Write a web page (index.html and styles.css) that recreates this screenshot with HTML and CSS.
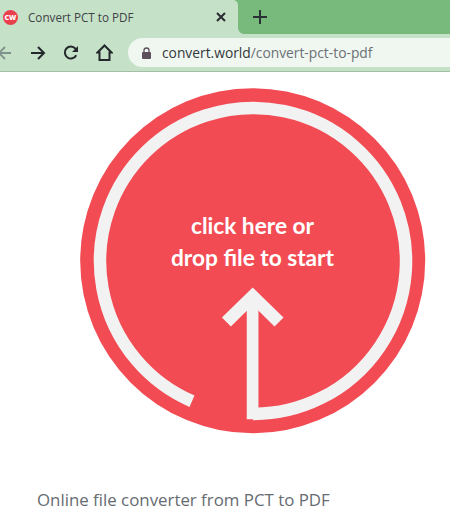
FILE: index.html
```html
<!DOCTYPE html>
<html lang="en">
<head>
<meta charset="utf-8">
<title>Convert PCT to PDF</title>
<link rel="stylesheet" href="styles.css">
</head>
<body>
<header class="chrome">
  <div class="tabstrip">
    <div class="tab">
      <span class="favicon">CW</span>
      <span class="tab-title">Convert PCT to PDF</span>
      <svg class="tab-close" width="10" height="10" viewBox="0 0 10 10"><path d="M1 1l8 8M9 1l-8 8" stroke="#2b2b33" stroke-width="2" fill="none"/></svg>
    </div>
    <svg class="new-tab" width="14" height="14" viewBox="0 0 14 14"><path d="M7 0v14M0 7h14" stroke="#2b3034" stroke-width="2" fill="none"/></svg>
  </div>
  <div class="toolbar">
    <svg class="nav nav-back" width="14" height="14" viewBox="0 0 14 14"><path d="M13 7H1M7 1L1 7l6 6" stroke="#80908a" stroke-width="1.8" fill="none"/></svg>
    <svg class="nav nav-forward" width="16" height="14" viewBox="0 0 16 14"><path d="M1 7h13M8 1l6 6-6 6" stroke="#24282c" stroke-width="2" fill="none"/></svg>
    <svg class="nav nav-reload" width="16" height="16" viewBox="0 0 16 16"><path d="M13.2 10.2A6 6 0 1 1 12.4 3.6L14 5.2" stroke="#24282c" stroke-width="2" fill="none"/><path d="M15 1v6H9z" fill="#24282c"/></svg>
    <svg class="nav nav-home" width="17" height="17" viewBox="0 0 17 17"><path d="M1.5 8.5L8.500 1.500l7 7H13.500V16H3.500V8.500z" stroke="#24282c" stroke-width="2" fill="none"/></svg>
    <div class="omnibox">
      <svg class="lock" width="9" height="12" viewBox="0 0 9 12"><path d="M2 5V3.500a2.500 2.500 0 0 1 5 0V5" stroke="#5d4f5c" stroke-width="1.300" fill="none"/><rect x="0" y="5" width="9" height="7" rx="1" fill="#5d4f5c"/></svg>
      <span class="url"><span class="url-host">convert.world</span>/convert-pct-to-pdf</span>
    </div>
  </div>
</header>
<main class="page">
  <div class="dropzone">
    <svg class="dial" width="346" height="346" viewBox="0 0 346 346">
      <circle cx="172.700" cy="172.700" r="172.500" fill="#f24b54"/>
      <path d="M112 313.300A153 153 0 1 1 173 326" fill="none" stroke="#f2f2f2" stroke-width="12.500"/>
      <path d="M172.600 331.300V206" fill="none" stroke="#f2f2f2" stroke-width="11.700"/>
      <path d="M172.700 199.500l30.800 30-9 9L172.700 217l-21.800 21.500-9-9z" fill="#f2f2f2"/>
    </svg>
    <p class="cta">click here or<br>drop file to start</p>
  </div>
  <h1 class="headline">Online file converter from PCT to PDF</h1>
</main>
</body>
</html>
```
FILE: styles.css
```css
* { box-sizing: border-box; }
html, body { margin: 0; padding: 0; }
body {
  width: 450px;
  height: 520px;
  overflow: hidden;
  background: #fff;
  font-family: "Open Sans", "Noto Sans", sans-serif;
}
.chrome { border-bottom: 1px solid #a5bfa7; }
.tabstrip {
  display: flex;
  align-items: center;
  height: 34px;
  background: #78b97c;
}
.tab {
  position: relative;
  display: flex;
  align-items: center;
  width: 238px;
  height: 34px;
  padding-left: 3px;
  background: #c5e1c7;
  border-top-right-radius: 5px;
}
.tab::after {
  content: "";
  position: absolute;
  right: -6px;
  bottom: 0;
  width: 6px;
  height: 6px;
  background: radial-gradient(circle at 100% 0, transparent 5.500px, #c5e1c7 6.200px);
}
.favicon {
  display: flex;
  align-items: center;
  justify-content: center;
  width: 15px;
  height: 15px;
  border-radius: 50%;
  background: #e8404c;
  color: #fff;
  font-size: 7px;
  font-weight: 800;
}
.tab-title {
  margin-left: 10px;
  font-size: 11.700px;
  color: #3f4145;
  white-space: nowrap;
}
.tab-close { margin-left: 82px; }
.new-tab { margin-left: 15px; }
.toolbar {
  display: flex;
  align-items: center;
  height: 37px;
  background: #c5e1c7;
}
.nav { flex: none; }
.nav-back { margin-left: -2px; }
.nav-forward { margin-left: 18px; }
.nav-reload { margin-left: 17px; }
.nav-home { margin-left: 17px; }
.omnibox {
  display: flex;
  align-items: center;
  flex: 1;
  height: 29px;
  margin-left: 15px;
  padding-left: 14px;
  background: #f0f7f1;
  border-radius: 15px 0 0 15px;
}
.url {
  margin-left: 11px;
  font-size: 13.800px;
  color: #6c7176;
  white-space: nowrap;
}
.url-host { color: #33373b; }
.page { padding-top: 16px; }
.dropzone {
  position: relative;
  width: 346px;
  height: 346px;
  margin-left: 80px;
}
.dial { display: block; }
.cta {
  position: absolute;
  top: 122px;
  left: -1px;
  right: 0;
  margin: 0;
  text-align: center;
  font-family: Lato, "Open Sans", sans-serif;
  font-size: 22.700px;
  font-weight: 700;
  line-height: 32px;
  color: #fff;
}
.headline {
  margin: 54px 0 0 37px;
  font-size: 16.850px;
  font-weight: 500;
  line-height: 24px;
  color: #666b71;
  white-space: nowrap;
}
```
